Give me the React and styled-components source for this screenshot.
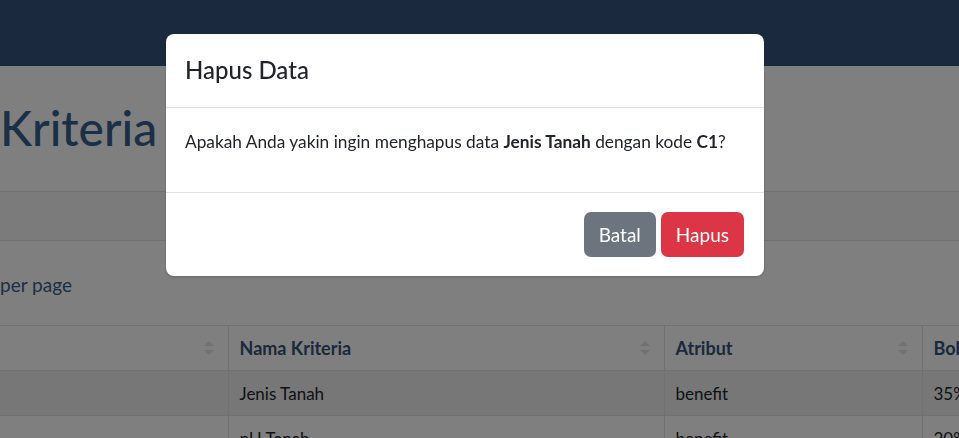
import React from 'react';
import styled, { createGlobalStyle } from 'styled-components';

const GlobalStyle = createGlobalStyle`
  html, body {
    margin: 0;
    padding: 0;
    overflow: hidden;
    background: #fff;
  }
  body {
    font-family: Lato, 'Noto Sans', sans-serif;
    color: #212529;
    font-size: 19px;
  }
`;

const Page = styled.div`
  width: 959px;
  height: 438px;
  overflow: hidden;
`;

const Navbar = styled.div`
  height: 66px;
  background: #34537a;
`;

const Heading = styled.h1`
  margin: 0;
  padding: 29px 0 31px;
  font-size: 48px;
  font-weight: 500;
  line-height: 65px;
  color: #37608f;
`;

const Card = styled.div`
  border-top: 1px solid #dee2e6;
`;

const CardHeader = styled.div`
  height: 48px;
  background: #f7f7f7;
  border-bottom: 1px solid #dee2e6;
`;

const CardBody = styled.div`
  padding-top: 29px;
`;

const PerPage = styled.div`
  line-height: 29px;
  color: #37608f;
  margin-bottom: 26px;
`;

const Table = styled.table`
  border-collapse: collapse;
  table-layout: fixed;
  width: 1100px;
`;

const Th = styled.th`
  position: relative;
  width: ${(p) => p.$w}px;
  height: 45px;
  box-sizing: border-box;
  padding: 0 12px 0 11px;
  text-align: left;
  font-size: 18px;
  font-weight: 700;
  color: #34537a;
  border: 1px solid #dee2e6;
  border-left: ${(p) => (p.$first ? 'none' : '1px solid #dee2e6')};
  white-space: nowrap;
`;

const SortArrows = styled.span`
  position: absolute;
  right: 14px;
  top: 50%;
  transform: translateY(-50%);
  display: flex;
  flex-direction: column;
  gap: 4px;
  &::before,
  &::after {
    content: '';
    width: 0;
    height: 0;
    border-left: 5px solid transparent;
    border-right: 5px solid transparent;
  }
  &::before {
    border-bottom: 5px solid #e3e3e3;
  }
  &::after {
    border-top: 5px solid #e3e3e3;
  }
`;

const Tr = styled.tr`
  background: ${(p) => (p.$striped ? '#efefef' : 'transparent')};
`;

const Td = styled.td`
  height: 45px;
  box-sizing: border-box;
  padding: 0 12px 0 11px;
  font-size: 17px;
  border: 1px solid #dee2e6;
  border-left: ${(p) => (p.$first ? 'none' : '1px solid #dee2e6')};
  color: #212529;
  white-space: nowrap;
`;

const Backdrop = styled.div`
  position: fixed;
  inset: 0;
  background: rgba(0, 0, 0, 0.5);
`;

const Modal = styled.div`
  position: fixed;
  left: 166px;
  top: 34px;
  width: 598px;
  background: #fff;
  border-radius: 8px;
  box-shadow: 0 1px 3px rgba(0, 0, 0, 0.2);
  overflow: hidden;
`;

const ModalHeader = styled.div`
  padding: 18px 19px 19px;
  border-bottom: 1px solid #dee2e6;
`;

const ModalTitle = styled.h5`
  margin: 0;
  font-size: 24px;
  font-weight: 500;
  line-height: 36px;
  color: #212529;
`;

const ModalBody = styled.div`
  padding: 19px 19px 20px;
  border-bottom: 1px solid #dee2e6;
`;

const Message = styled.p`
  margin: 0 0 16px;
  line-height: 29px;
  font-size: 17.3px;
  white-space: nowrap;
`;

const ModalFooter = styled.div`
  display: flex;
  justify-content: flex-end;
  gap: 5px;
  padding: 19px 20px 19px;
`;

const Button = styled.button`
  height: 45px;
  padding: 0 15px;
  border: none;
  border-radius: 7px;
  font-family: inherit;
  font-size: 19px;
  color: #fff;
  background: ${(p) => (p.$variant === 'danger' ? '#dc3545' : '#6c757d')};
`;

const columns = [
  { label: '', w: 228 },
  { label: 'Nama Kriteria', w: 436 },
  { label: 'Atribut', w: 258 },
  { label: 'Bobot', w: 178 },
];

const rows = [
  ['', 'Jenis Tanah', 'benefit', '35%'],
  ['', 'pH Tanah', 'benefit', '20%'],
];

const App = () => {
  return (
    <>
      <GlobalStyle />
      <Page>
        <Navbar />
        <Heading>Kriteria</Heading>
        <Card>
          <CardHeader />
          <CardBody>
            <PerPage>per page</PerPage>
            <Table>
              <thead>
                <tr>
                  {columns.map((c, i) => (
                    <Th key={i} $w={c.w} $first={i === 0}>
                      {c.label}
                      {i < 3 && <SortArrows />}
                    </Th>
                  ))}
                </tr>
              </thead>
              <tbody>
                {rows.map((r, i) => (
                  <Tr key={i} $striped={i === 0}>
                    {r.map((cell, j) => (
                      <Td key={j} $first={j === 0}>
                        {cell}
                      </Td>
                    ))}
                  </Tr>
                ))}
              </tbody>
            </Table>
          </CardBody>
        </Card>
      </Page>
      <Backdrop />
      <Modal>
        <ModalHeader>
          <ModalTitle>Hapus Data</ModalTitle>
        </ModalHeader>
        <ModalBody>
          <Message>
            Apakah Anda yakin ingin menghapus data <b>Jenis Tanah</b> dengan kode <b>C1</b>?
          </Message>
        </ModalBody>
        <ModalFooter>
          <Button>Batal</Button>
          <Button $variant="danger">Hapus</Button>
        </ModalFooter>
      </Modal>
    </>
  );
};

export default App;
